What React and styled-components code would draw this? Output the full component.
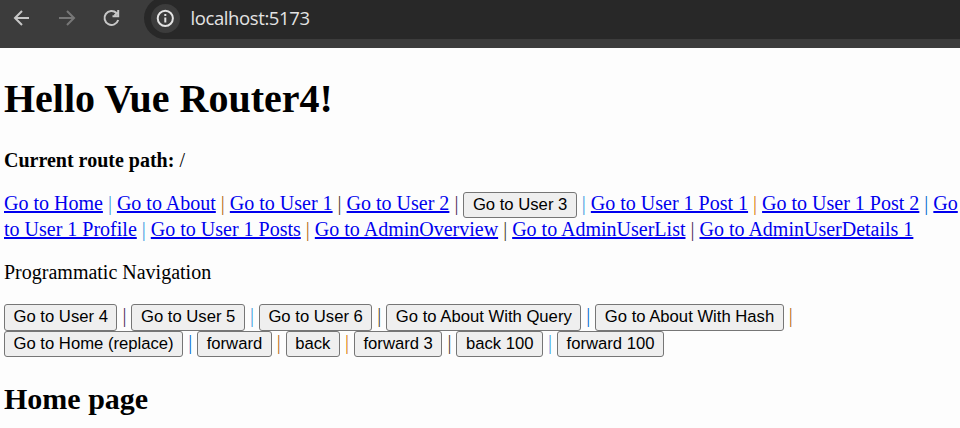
import React from "react";
import styled, { createGlobalStyle } from "styled-components";

const GlobalStyle = createGlobalStyle`
  body { margin: 0; background: #fdfdfd; overflow: hidden; }
  * { box-sizing: border-box; }
`;

const Page = styled.div`
  width: 960px;
  height: 428px;
  overflow: hidden;
  background: #fdfdfd;
  color: #000;
  font: 20px/26px "Liberation Serif", serif;
`;

const Toolbar = styled.header`
  display: flex;
  align-items: flex-start;
  height: 48px;
  overflow: hidden;
  background: #3c3c3c;
`;

const NavIcons = styled.div`
  display: flex;
  width: 144px;
  height: 36px;
`;

const Icon = styled.svg`
  flex: none;
  width: 45px;
  height: 36px;
  fill: none;
  stroke: ${(p) => p.$tone || "#c7c7c7"};
  stroke-width: 2;
`;

const AddressBar = styled.div`
  display: flex;
  align-items: center;
  flex: 1;
  height: 42px;
  margin-top: -3px;
  padding: 1px 0 0 7px;
  border-radius: 21px 0 0 21px;
  background: #282828;
`;

const InfoBadge = styled.svg`
  flex: none;
  width: 29px;
  height: 29px;
`;

const Url = styled.span`
  margin: -2px 0 0 10.5px;
  color: #e3e3e3;
  font: 18.5px/36px "Open Sans", sans-serif;
  letter-spacing: -0.4px;
  white-space: nowrap;
`;

const Content = styled.main`
  padding: 0 0 0 4px;
`;

const Title = styled.h1`
  margin: 28px 0 0;
  font-size: 40px;
  line-height: 46px;
`;

const RoutePath = styled.p`
  margin: 25px 0 0;
`;

const LinkList = styled.p`
  margin: 17px 0 0;
`;

const Label = styled.p`
  margin: 17px 0 0;
`;

const ButtonList = styled.p`
  margin: 17px 0 0;
  line-height: 27px;
`;

const Heading = styled.h2`
  margin: 25px 0 0;
  font-size: 30px;
  line-height: 36px;
`;

const Link = styled.a`
  color: #0000ee;
  text-decoration: underline;
  text-decoration-thickness: 2px;
  text-underline-offset: 1px;
  text-decoration-skip-ink: none;
`;

const Button = styled.button`
  height: ${(p) => (p.$compact ? 26 : 27)}px;
  margin: -6px 0;
  padding: ${(p) => (p.$compact ? 1 : 0)}px 8.5px 0;
  border: 1px solid #767676;
  border-radius: 3px;
  background: #efefef;
  color: #000;
  font: 16.667px/22px "Liberation Sans", Arial, sans-serif;
  vertical-align: baseline;
`;

const tones = {
  sky: "#3fa0e0",
  amber: "#b5681a",
  orange: "#d9800f",
  blue: "#0868cc",
  plum: "#4c2f58",
  slate: "#4a4530",
};

const Bar = styled.span`
  color: ${(p) => tones[p.$tone]};
`;

const links = [
  { text: "Go to Home", tone: "sky" },
  { text: "Go to About", tone: "amber" },
  { text: "Go to User 1", tone: "slate" },
  { text: "Go to User 2", tone: "plum" },
  { text: "Go to User 3", tone: "sky", isButton: true },
  { text: "Go to User 1 Post 1", tone: "orange" },
  { text: "Go to User 1 Post 2", tone: "blue" },
  { text: "Go to User 1 Profile", tone: "sky" },
  { text: "Go to User 1 Posts", tone: "amber" },
  { text: "Go to AdminOverview", tone: "slate" },
  { text: "Go to AdminUserList", tone: "plum" },
  { text: "Go to AdminUserDetails 1" },
];

const buttons = [
  { text: "Go to User 4", tone: "plum" },
  { text: "Go to User 5", tone: "sky" },
  { text: "Go to User 6", tone: "slate" },
  { text: "Go to About With Query", tone: "blue" },
  { text: "Go to About With Hash", tone: "amber" },
  { text: "Go to Home (replace)", tone: "blue", compact: true },
  { text: "forward", tone: "amber", compact: true },
  { text: "back", tone: "orange", compact: true },
  { text: "forward 3", tone: "slate", compact: true },
  { text: "back 100", tone: "sky", compact: true },
  { text: "forward 100", compact: true },
];

export default function App() {
  return (
    <Page>
      <GlobalStyle />
      <Toolbar>
        <NavIcons>
          <Icon viewBox="0 0 45 36"><path d="M29 18H15.5M22 11l-7 7 7 7" /></Icon>
          <Icon viewBox="0 0 45 36" $tone="#777"><path d="M14 18h14.5M22 11l7 7-7 7" /></Icon>
          <Icon viewBox="0 0 45 36">
            <path d="M26.5 13A7 7 0 1 0 28.2 20" />
            <path d="M28.2 10v6.2H22.5M27.6 12.5l-3 3" />
          </Icon>
        </NavIcons>
        <AddressBar>
          <InfoBadge viewBox="0 0 29 29">
            <circle cx="14.5" cy="14.5" r="14.5" fill="#3c3c3c" />
            <circle cx="14.3" cy="14.3" r="7.6" fill="none" stroke="#e3e3e3" strokeWidth="2" />
            <path d="M14.3 13.4v5M14.3 10v2" stroke="#e3e3e3" strokeWidth="2" />
          </InfoBadge>
          <Url>localhost:5173</Url>
        </AddressBar>
      </Toolbar>
      <Content>
        <Title>Hello Vue Router4!</Title>
        <RoutePath><strong>Current route path:</strong> /</RoutePath>
        <LinkList>
          {links.map(({ text, tone, isButton }) => (
            <React.Fragment key={text}>
              {isButton ? <Button $compact>{text}</Button> : <Link href="#">{text}</Link>}
              {tone && <> <Bar $tone={tone}>|</Bar> </>}
            </React.Fragment>
          ))}
        </LinkList>
        <Label>Programmatic Navigation</Label>
        <ButtonList>
          {buttons.map(({ text, tone, compact }) => (
            <React.Fragment key={text}>
              <Button $compact={compact}>{text}</Button>
              {tone && <> <Bar $tone={tone}>|</Bar> </>}
            </React.Fragment>
          ))}
        </ButtonList>
        <Heading>Home page</Heading>
      </Content>
    </Page>
  );
}
